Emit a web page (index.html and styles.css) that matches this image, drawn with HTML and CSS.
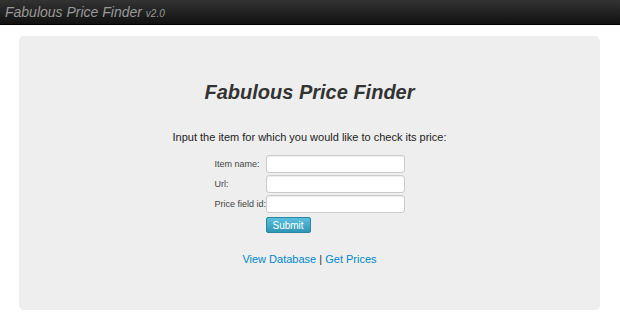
FILE: index.html
```html
<!DOCTYPE html>
<html lang="en">
<head>
    <meta charset="UTF-8">
    <meta name="viewport" content="width=device-width, initial-scale=1.0">
    <title>Fabulous Price Finder</title>
    <link rel="stylesheet" href="styles.css">
</head>
<body>

<div class="navbar">
    <a class="brand" href="#">Fabulous Price Finder <small>v2.0</small></a>
</div>

<div class="container">
    <div class="hero-unit">
        <h1>Fabulous Price Finder</h1>
        <p class="lead">Input the item for which you would like to check its price:</p>
        <form id="priceForm">
            <table class="form-table">
                <tr>
                    <td><label for="item-name">Item name:</label></td>
                    <td><input type="text" id="item-name"></td>
                </tr>
                <tr>
                    <td><label for="item-url">Url:</label></td>
                    <td><input type="text" id="item-url"></td>
                </tr>
                <tr>
                    <td><label for="price-field">Price field id:</label></td>
                    <td><input type="text" id="price-field"></td>
                </tr>
                <tr>
                    <td></td>
                    <td><button type="submit" class="btn">Submit</button></td>
                </tr>
            </table>
        </form>
        <p class="links"><a href="#">View Database</a> | <a href="#">Get Prices</a></p>
    </div>
</div>

</body>
</html>
```

FILE: styles.css
```css
body {
    font-family: "Liberation Sans", Arial, sans-serif;
    font-size: 13px;
    color: #333;
    background-color: #fff;
    margin: 0;
    padding: 0;
}
a {
    color: #0088cc;
    text-decoration: none;
}
.navbar {
    height: 25px;
    background: linear-gradient(#333, #111);
    border-bottom: 1px solid #000;
    box-sizing: border-box;
    padding: 0 5px;
}
.brand {
    display: inline-block;
    color: #999;
    font-size: 14px;
    font-style: italic;
    line-height: 24px;
}
.brand small {
    font-size: 10px;
}
.container {
    padding: 11px 20px 0 19px;
}
.hero-unit {
    background-color: #eee;
    border-radius: 5px;
    height: 274px;
    padding-top: 43px;
    box-sizing: border-box;
    text-align: center;
}
h1 {
    margin: 0;
    font-size: 20px;
    font-style: italic;
    font-weight: bold;
    line-height: 26px;
    color: #333;
}
.lead {
    margin: 24px 0 10px;
    font-size: 11px;
    line-height: 16px;
    color: #222;
}
.form-table {
    margin: 0 auto;
    border-collapse: collapse;
    font-size: 9px;
    text-align: left;
}
.form-table td {
    padding: 0 0 2px;
    vertical-align: middle;
}
.form-table label {
    display: block;
    width: 51px;
    white-space: nowrap;
    color: #444;
}
input {
    width: 139px;
    height: 18px;
    border: 1px solid #ccc;
    border-radius: 3px;
    box-sizing: border-box;
    background: #fff;
    margin: 0;
    box-shadow: inset 0 1px 1px rgba(0,0,0,0.075);
}
.btn {
    margin-top: 2px;
    padding: 0 6px;
    height: 16px;
    font-family: "Liberation Sans", Arial, sans-serif;
    font-size: 10px;
    color: #fff;
    background: linear-gradient(#5bc0de, #2f96b4);
    border: 1px solid #2a85a0;
    border-radius: 2px;
    cursor: pointer;
}
.links {
    margin: 18px 0 0;
    font-size: 11px;
}
```
